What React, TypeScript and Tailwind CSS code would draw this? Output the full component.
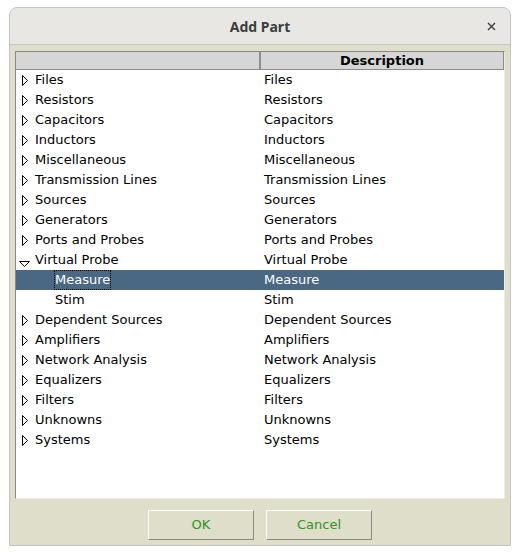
import React from "react";

const parts = [
  { name: "Files", open: false },
  { name: "Resistors", open: false },
  { name: "Capacitors", open: false },
  { name: "Inductors", open: false },
  { name: "Miscellaneous", open: false },
  { name: "Transmission Lines", open: false },
  { name: "Sources", open: false },
  { name: "Generators", open: false },
  { name: "Ports and Probes", open: false },
  { name: "Virtual Probe", open: true, children: ["Measure", "Stim"] },
  { name: "Dependent Sources", open: false },
  { name: "Amplifiers", open: false },
  { name: "Network Analysis", open: false },
  { name: "Equalizers", open: false },
  { name: "Filters", open: false },
  { name: "Unknowns", open: false },
  { name: "Systems", open: false },
];

const font = { fontFamily: '"DejaVu Sans", sans-serif' };

function Collapsed() {
  return (
    <svg width="6" height="11" viewBox="0 0 6 11" className="ml-[6px] mr-[6px] shrink-0">
      <polygon points="0.5,0.5 5.5,5.5 0.5,10.5" fill="white" stroke="black" strokeWidth="1" />
    </svg>
  );
}

function Expanded() {
  return (
    <svg width="11" height="7" viewBox="0 0 11 7" className="ml-[3px] mr-[4px] mt-[8px] shrink-0">
      <polygon points="0.5,0.5 10.5,0.5 5.5,5.5" fill="white" stroke="black" strokeWidth="1" />
    </svg>
  );
}

function Row({ label, selected, child, open }: { label: string; selected?: boolean; child?: boolean; open?: boolean }) {
  return (
    <div className={`flex h-5 items-stretch text-[13px] ${selected ? "bg-[#4a6784] text-white" : "text-black"}`}>
      <div className="flex w-[245px] items-center">
        {child ? (
          <div className="w-[38px] shrink-0" />
        ) : open ? (
          <Expanded />
        ) : (
          <Collapsed />
        )}
        <span
          className={`leading-[18px] ${selected ? "border border-dotted border-black" : "border border-transparent"}`}
        >
          {label}
        </span>
      </div>
      <div className="flex items-center pl-[3px]">{label}</div>
    </div>
  );
}

export default function App() {
  return (
    <div className="h-[555px] w-[520px] bg-white pl-[9px] pt-[7px]" style={font}>
      <div className="flex h-[539px] w-[502px] flex-col overflow-hidden rounded-t-[8px] border border-[#c4c4c2] bg-[#dfdecb]">
        <div className="relative flex h-[37px] shrink-0 items-center justify-center border-b border-[#c8c8c2] bg-[#e8e7e4]">
          <span
            className="text-[14px] font-bold text-[#3c3c3c]"
            style={{ fontFamily: '"Noto Sans", sans-serif' }}
          >
            Add Part
          </span>
          <svg width="9" height="9" viewBox="0 0 9 9" className="absolute right-[14px] top-[14px]">
            <path d="M1 1L8 8M8 1L1 8" stroke="#3c3c3c" strokeWidth="1.4" />
          </svg>
        </div>

        <div className="flex flex-1 flex-col px-[5px] pt-[6px]">
          <div className="h-[448px] border border-b-[#ececec] border-l-[#8a8a80] border-r-[#ececec] border-t-[#8a8a80] bg-white">
            <div className="flex h-[18px] bg-[#d6d6d6] text-[13px]">
              <div className="w-[244px] border-b border-r border-[#8c8c8c]" />
              <div className="flex flex-1 items-center justify-center border-b border-l border-r border-[#8c8c8c] font-bold text-black">
                Description
              </div>
            </div>
            {parts.map((p) => (
              <React.Fragment key={p.name}>
                <Row label={p.name} open={p.open} />
                {p.children?.map((c, i) => (
                  <Row key={c} label={c} child selected={i === 0} />
                ))}
              </React.Fragment>
            ))}
          </div>

          <div className="mt-[11px] flex justify-center gap-3">
            {["OK", "Cancel"].map((b) => (
              <button
                key={b}
                className="h-[30px] w-[106px] border border-b-[#8a8a80] border-l-white border-r-[#8a8a80] border-t-white bg-[#dfdecb] text-[13px] text-[#2f9420]"
              >
                {b}
              </button>
            ))}
          </div>
        </div>
      </div>
    </div>
  );
}
